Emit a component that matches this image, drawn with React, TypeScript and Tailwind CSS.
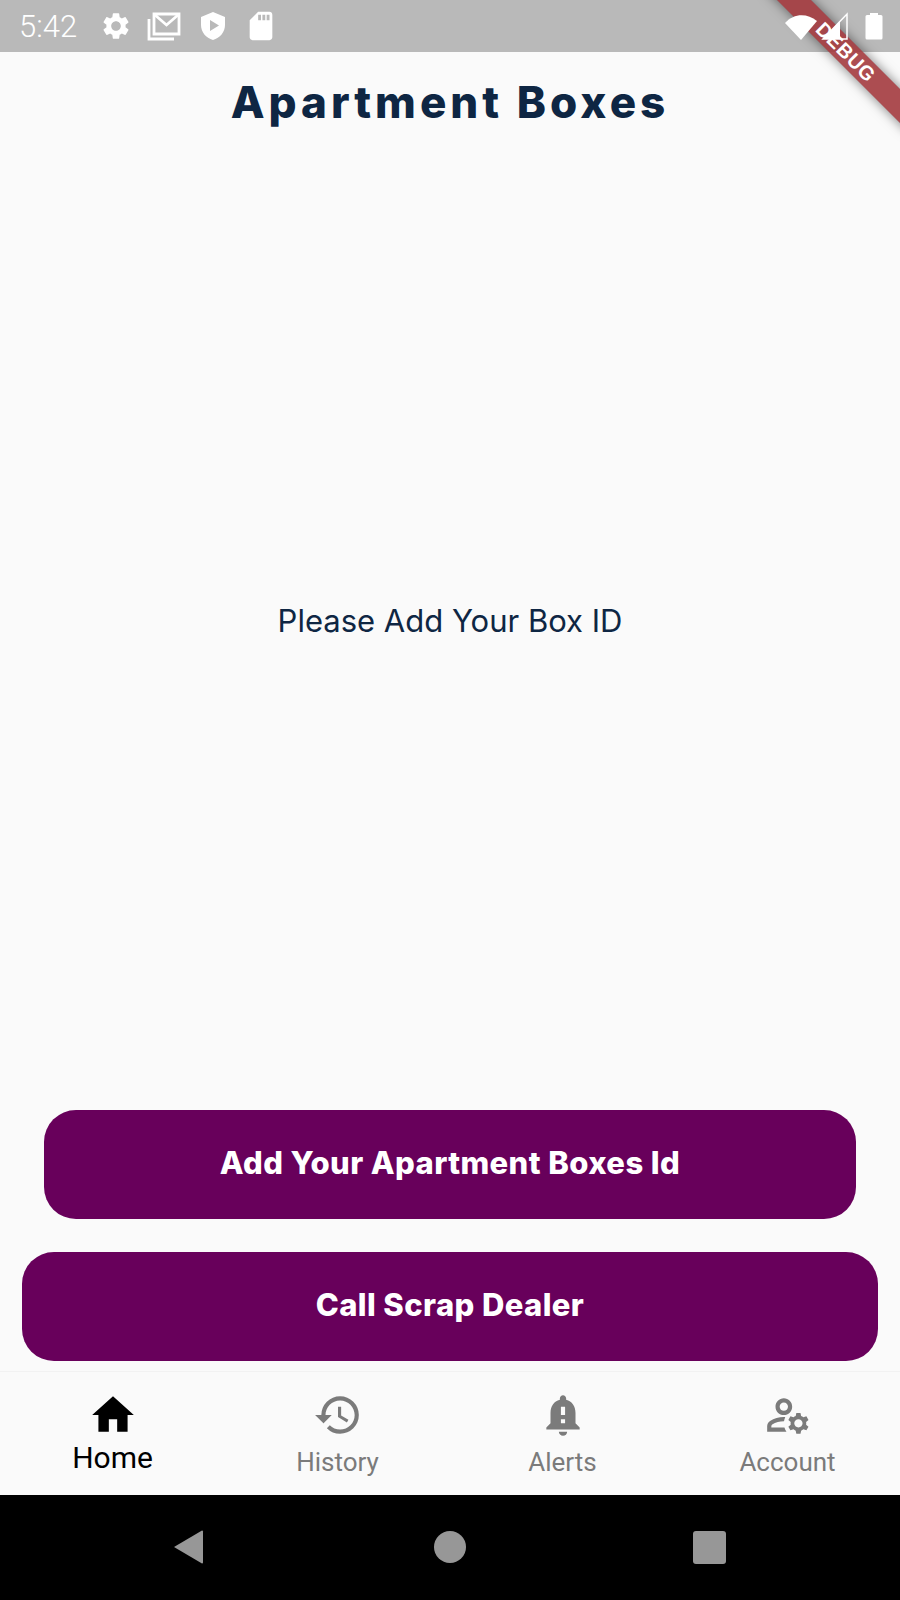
import { MdHome, MdHistory, MdNotificationImportant, MdOutlineManageAccounts, MdSettings, MdSdCard } from "react-icons/md";

const navItems = [
  { label: "Home", Icon: MdHome, active: true },
  { label: "History", Icon: MdHistory, active: false },
  { label: "Alerts", Icon: MdNotificationImportant, active: false },
  { label: "Account", Icon: MdOutlineManageAccounts, active: false },
];

function StatusBar() {
  return (
    <div className="h-[52px] shrink-0 bg-[#b9b9b9] flex items-center text-white pl-[19px] pr-[17px] font-['Roboto',sans-serif]">
      <span className="text-[31px] font-light w-[84px] leading-none">5:42</span>
      <MdSettings size={32} className="ml-[-3px]" />
      <svg width="34" height="30" viewBox="0 0 34 30" className="ml-[15px]" fill="none" stroke="white" strokeWidth="2.8">
        <path d="M7 3h25v20H7z" />
        <path d="M8 4l11.500 10L31 4" />
        <path d="M2 8v20h25" />
      </svg>
      <svg width="26" height="30" viewBox="0 0 26 30" className="ml-[19px]">
        <path fillRule="evenodd" fill="white" d="M13 1l12 5v8c0 7-5 13-12 15C6 27 1 21 1 14V6z M10 9v11l9-5.500z" />
      </svg>
      <MdSdCard size={34} className="ml-[18px]" />
      {/* system icons sit above the debug banner */}
      <div className="ml-auto flex items-center relative z-10">
        <svg width="34" height="28" viewBox="0 0 34 28"><path fill="white" d="M1 11C10 1 23 1 33 9L17 28z" /></svg>
        <svg width="28" height="28" viewBox="0 0 28 28" className="ml-[3px]"><path fill="none" stroke="white" strokeWidth="1.500" d="M26 2v25H2z" /><path fill="white" d="M19 9v18H2z" /></svg>
        <svg width="18" height="28" viewBox="0 0 18 28" className="ml-[16px]"><path fill="white" d="M5 1h8v2h3a1.500 1.500 0 0 1 1.500 1.500V26a1.500 1.500 0 0 1-1.500 1.500H2A1.500 1.500 0 0 1 .5 26V4.500A1.500 1.500 0 0 1 2 3h3z" /></svg>
      </div>
    </div>
  );
}

export default function App() {
  return (
    <div className="relative w-[900px] h-[1600px] overflow-hidden flex flex-col bg-[#fafafa] font-['Inter',sans-serif]">
      <StatusBar />

      <h1 className="mt-[20px] text-center text-[44px] leading-[60px] font-extrabold tracking-[4px] text-[#0e2643]">Apartment Boxes</h1>

      <div className="flex-1 flex items-center justify-center">
        <p className="text-[31px] text-[#0e2643]">Please Add Your Box ID</p>
      </div>

      <div className="px-[44px]">
        <button className="w-full h-[109px] rounded-[32px] bg-[#68005b] text-white text-[31px] font-extrabold tracking-[0.4px] pb-[2px]">Add Your Apartment Boxes Id</button>
      </div>
      <div className="px-[22px] mt-[33px]">
        <button className="w-full h-[109px] rounded-[32px] bg-[#68005b] text-white text-[31px] font-extrabold tracking-[0.4px] pb-[2px]">Call Scrap Dealer</button>
      </div>

      <nav className="mt-[10px] h-[124px] border-t border-[#f2f2f2] grid grid-cols-4 bg-[#fafafa] font-['Roboto',sans-serif]">
        {navItems.map(({ label, Icon, active }) => (
          <div key={label} className={`flex flex-col items-center pt-[18px] ${active ? "text-black" : "text-[#7b7b7b]"}`}>
            <Icon size={50} />
            <span className={active ? "text-[30px] leading-[36px]" : "text-[26px] leading-[32px] mt-[6px]"}>{label}</span>
          </div>
        ))}
      </nav>

      <div className="h-[105px] shrink-0 bg-black flex items-center relative">
        <svg width="32" height="36" viewBox="0 0 32 36" className="absolute left-[172px] top-[34px]"><path fill="#979797" d="M2 18L30 1.500a1 1 0 0 1 1 1v31a1 1 0 0 1-1 1z" /></svg>
        <div className="absolute left-[434px] top-[36px] w-[32px] h-[32px] rounded-full bg-[#979797]" />
        <div className="absolute left-[693px] top-[36px] w-[33px] h-[33px] rounded-[3px] bg-[#979797]" />
      </div>

      {/* debug banner */}
      <div className="absolute top-[40px] right-[-46px] w-[200px] h-[24px] rotate-45 bg-[#a33a3e]/90 shadow-[0_0_12px_rgba(0,0,0,0.5)] flex items-center justify-center">
        <span className="text-white text-[20px] font-bold tracking-[0.5px] leading-none font-['Liberation_Sans',sans-serif]">DEBUG</span>
      </div>
    </div>
  );
}
